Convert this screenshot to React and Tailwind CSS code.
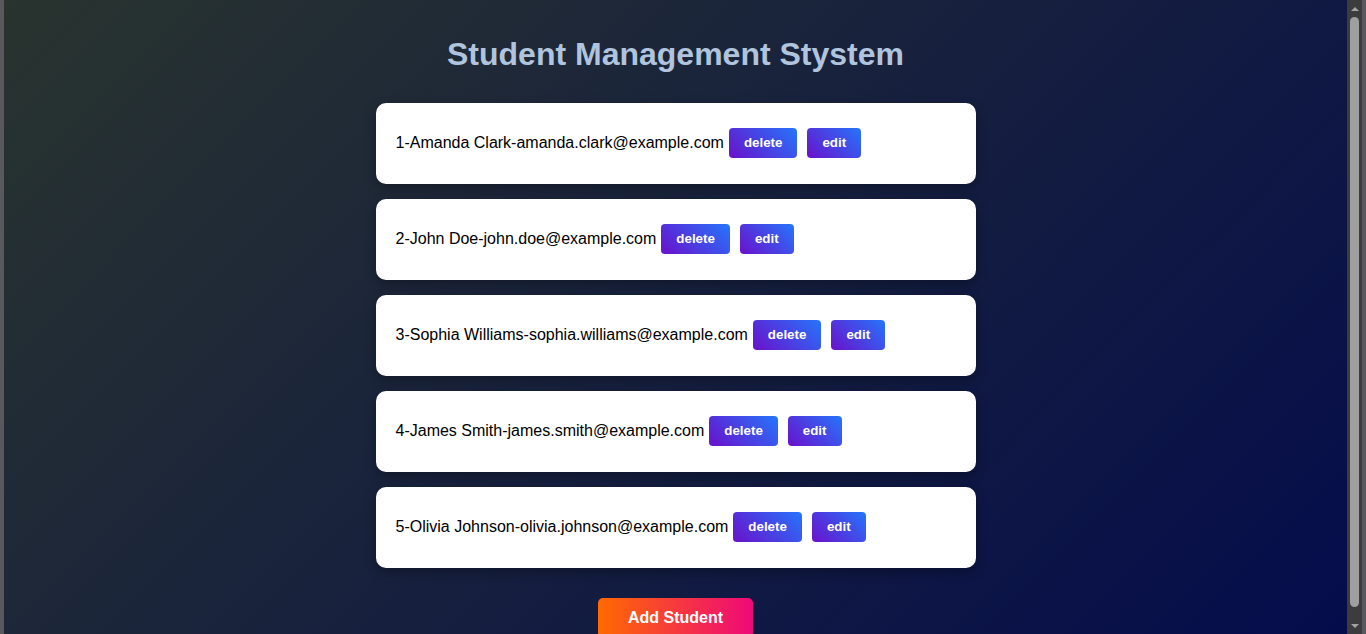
import React from "react";

const students = [
  { id: 1, name: "Amanda Clark", email: "amanda.clark@example.com" },
  { id: 2, name: "John Doe", email: "john.doe@example.com" },
  { id: 3, name: "Sophia Williams", email: "sophia.williams@example.com" },
  { id: 4, name: "James Smith", email: "james.smith@example.com" },
  { id: 5, name: "Olivia Johnson", email: "olivia.johnson@example.com" },
];

const ScrollBar = () => (
  <div className="w-[19px] h-[634px] shrink-0 flex bg-[#58585d]">
    <div className="w-[15px] h-full bg-[#3c3c3c] flex flex-col items-center">
      <div className="h-[17px] flex items-center justify-center">
        <div className="w-0 h-0 border-x-[4px] border-x-transparent border-b-[4px] border-b-[#a3a3a3]" />
      </div>
      <div className="w-[9px] h-[590px] rounded-full bg-[#9f9f9f]" />
      <div className="flex-1 flex items-end justify-center pb-[6px]">
        <div className="w-0 h-0 border-x-[4px] border-x-transparent border-t-[4px] border-t-[#a3a3a3]" />
      </div>
    </div>
  </div>
);

const App = () => {
  return (
    <div
      className="flex bg-[#58585d]"
      style={{ fontFamily: '"Liberation Sans", Arial, sans-serif' }}
    >
      <div className="flex-1 min-h-[645px] ml-[4px] bg-[linear-gradient(135deg,#29342f,#040c4c)] flex flex-col items-center pt-[36px] pb-[7px]">
        <h1 className="text-[32px] leading-[37px] font-bold text-[#b0c4de]">
          Student Management Stystem
        </h1>

        <ul className="mt-[30px] flex flex-col gap-[15px] w-[600px]">
          {students.map((s) => (
            <li
              key={s.id}
              className="h-[81px] flex items-center px-5 pb-[1px] bg-white rounded-[10px] shadow-[0_4px_12px_rgba(0,0,0,0.3)] text-base text-black"
            >
              <span>
                {s.id}-{s.name}-{s.email}
              </span>
              <button className="h-[30px] px-[15px] mx-[5px] rounded-[4px] bg-[linear-gradient(45deg,#6a11cb,#2575fc)] text-white text-[13.33px] font-bold">
                delete
              </button>
              <button className="h-[30px] px-[15px] mx-[5px] rounded-[4px] bg-[linear-gradient(45deg,#6a11cb,#2575fc)] text-white text-[13.33px] font-bold">
                edit
              </button>
            </li>
          ))}
        </ul>

        <button className="mt-[30px] h-[40px] w-[155px] rounded-[5px] bg-[linear-gradient(90deg,#ff6a00,#ee0979)] text-white text-base font-bold">
          Add Student
        </button>
      </div>
      <ScrollBar />
    </div>
  );
};

export default App;
